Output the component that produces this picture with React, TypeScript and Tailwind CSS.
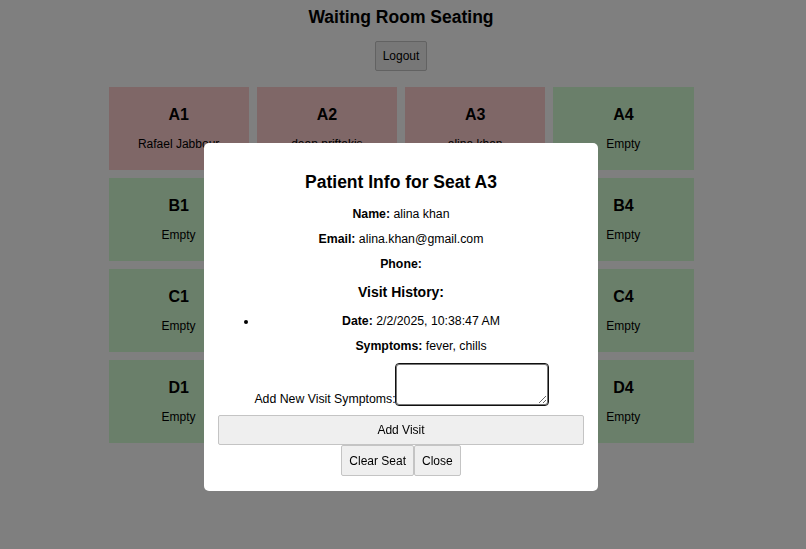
import { useState } from 'react';

type Seat = { id: string; name?: string };

const rows = ['A', 'B', 'C', 'D'];
const occupied: Record<string, string> = {
  A1: 'Rafael Jabbour',
  A2: 'dean priftakis',
  A3: 'alina khan',
};

const seats: Seat[] = rows.flatMap((r) =>
  [1, 2, 3, 4].map((n) => ({ id: `${r}${n}`, name: occupied[`${r}${n}`] })),
);

const btn =
  'bg-[#efefef] border border-[#c4c4c4] text-[12px] text-black rounded-[2px]';

export default function App() {
  const [symptoms, setSymptoms] = useState('');

  return (
    <div className="relative min-h-[549px] bg-white text-black font-['Liberation_Sans',Arial,sans-serif]">
      <div className="flex flex-col items-center pr-[4px]">
        <h1 className="text-[17.5px] font-bold leading-[22px] mt-[6px]">Waiting Room Seating</h1>
        <button className={`${btn} mt-[13px] h-[30px] w-[52px] border-[#999]`}>Logout</button>
        <div className="grid grid-cols-4 gap-x-[8px] gap-y-[8px] mt-[16px] w-[585px]">
          {seats.map((s) => (
            <div
              key={s.id}
              className={`h-[83px] flex flex-col items-center pt-[18px] ${
                s.name ? 'bg-[#ffcfcf]' : 'bg-[#d4ffd4]'
              }`}
            >
              <h3 className="text-[16px] font-bold leading-[20px]">{s.id}</h3>
              <p className="text-[12px] leading-[15px] mt-[12px]">{s.name ?? 'Empty'}</p>
            </div>
          ))}
        </div>
      </div>

      <div className="fixed inset-0 bg-black/50 flex items-start justify-center pr-[4px]">
        <div className="mt-[143px] w-[394px] bg-white rounded-[5px] px-[14px] pt-[28px] pb-[15px] flex flex-col items-center text-[12.3px]">
          <h2 className="text-[17.5px] font-bold leading-[22px]">Patient Info for Seat A3</h2>
          <p className="mt-[14px] leading-[15px]">
            <b>Name:</b> alina khan
          </p>
          <p className="mt-[10px] leading-[15px]">
            <b>Email:</b> alina.khan@gmail.com
          </p>
          <p className="mt-[10px] leading-[15px]">
            <b>Phone:</b>
          </p>
          <h3 className="mt-[11px] text-[14px] font-bold leading-[18px]">Visit History:</h3>
          <ul className="w-full list-disc pl-10 text-center mt-[13px]">
            <li className="leading-[15px]">
              <p>
                <b>Date:</b> 2/2/2025, 10:38:47 AM
              </p>
              <p className="mt-[10px]">
                <b>Symptoms:</b> fever, chills
              </p>
            </li>
          </ul>
          <div className="mt-[10px] flex items-end">
            <label className="leading-[15px] mb-[-2px]">Add New Visit Symptoms:</label>
            <textarea
              autoFocus
              value={symptoms}
              onChange={(e) => setSymptoms(e.target.value)}
              className="w-[152px] h-[41px] border border-[#767676] rounded-[3px] outline outline-[1.5px] outline-[#101010] px-[4px] py-[2px] text-[12px] resize"
            />
          </div>
          <button className={`${btn} w-full h-[30px] mt-[10px]`}>Add Visit</button>
          <div className="flex">
            <button className={`${btn} h-[31px] px-[7px]`}>Clear Seat</button>
            <button className={`${btn} h-[31px] px-[7px]`}>Close</button>
          </div>
        </div>
      </div>
    </div>
  );
}
